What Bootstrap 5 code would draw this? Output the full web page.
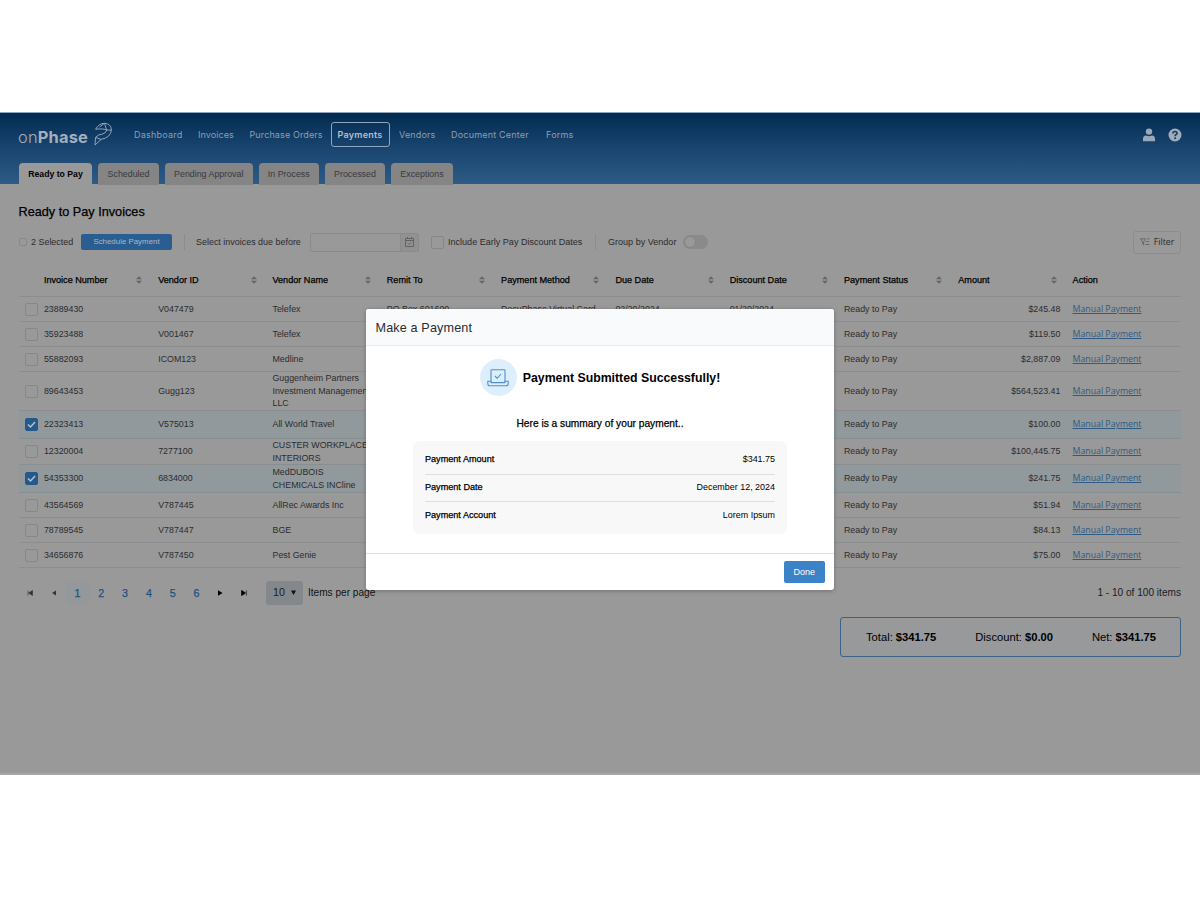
<!DOCTYPE html>
<html lang="en">
<head>
<meta charset="utf-8">
<title>onPhase - Ready to Pay Invoices</title>
<link href="https://cdn.jsdelivr.net/npm/bootstrap@5.3.0/dist/css/bootstrap.min.css" rel="stylesheet">
<style>
body{font-family:"Liberation Sans",Arial,sans-serif;font-size:8.85px;line-height:13px;color:#2c2c2e;background:#fff;overflow:hidden}
.stage{margin-top:112px;height:663px;background:#999;border-bottom:2px solid #a6a6a6}
.topbar{height:72px;background:linear-gradient(#032b50,#194570 50%,#2d5b85);border-top:1px solid #8da6bd;padding:0 18px 0 19px}
.topline{height:43px}
.brand{font:300 16.4px/20px Inter,sans-serif;color:#a3b0bc;width:76px;padding-top:4px;letter-spacing:.2px;margin-left:-1px;white-space:nowrap}
.brand b{font-weight:700}
.menu{font:400 9px/14px Inter,sans-serif;margin-left:13px}
.menu a{color:#8c9fb2;text-decoration:none;white-space:nowrap;padding:4.5px 0 4px 7px;border:1px solid transparent;height:25px}
.menu a:nth-child(1){width:64px;letter-spacing:.22px}.menu a:nth-child(2){width:51.5px;letter-spacing:.08px}.menu a:nth-child(3){width:89.5px;letter-spacing:.12px}
.menu a.on{width:59px;font-weight:600;color:#b5bfc9;border-color:#8fa5ba;border-radius:3px;padding-left:5.5px;letter-spacing:.25px}
.menu a:nth-child(5){width:53px;padding-left:8px;letter-spacing:.15px}.menu a:nth-child(6){width:95px;letter-spacing:.2px}.menu a:nth-child(7){letter-spacing:.2px}
.tabs{gap:6px;margin-top:7px;font-size:8.85px}
.tabs span{height:21.5px;line-height:22px;background:#858586;border-radius:4px 4px 0 0;color:#38393b;text-align:center;white-space:nowrap}
.tabs span.on{background:#999;color:#000;font-weight:700;font-size:8.7px}
.t1{width:73px}.t2{width:61px}.t3{width:87.5px}.t4{width:60.5px}.t5{width:60px}.t6{width:62px}
.med{-webkit-text-stroke:.25px currentColor}
.ttl{font-size:12.7px;line-height:16px;color:#000;margin:20px 0 0 18.5px}
.tools{height:24px;margin:10px 19px 0;font-size:8.95px}
.tools>*{flex:none}
.sq{display:block;width:13px;height:13px;border:1px solid #858789;border-radius:2px}
.sched{width:91px;height:16px;border-radius:2px;background:#2a5e91;color:#a8b8c8;text-align:center;font-size:7.9px;line-height:16px}
.rule{width:1px;height:16px;background:#8b8d8f}
.dt{width:109px;height:19px;border:1px solid #888a8c;border-radius:2px}
.dt span{width:18px;border-left:1px solid #8b8b8b;background:#919192}
.sw{width:25px;height:14px;border-radius:8px;background:#8a8a8b;padding:1px}
.sw i{display:block;width:12px;height:12px;border-radius:50%;background:#999;border:1px solid #858585}
.filt{width:48px;height:23px;border:1px solid #8b8c8e;border-radius:3px;font:8.8px/13px "Open Sans",sans-serif}
.grid{table-layout:fixed;width:1162px;margin:10px 0 0 19px;border-collapse:separate;border-spacing:0}
.grid th,.grid td{padding:0 0 0 5.9px;border-bottom:1px solid #8c8d8f;vertical-align:middle;line-height:12.66px}
.grid th{height:33px;padding-top:1px;color:#000;font-weight:400;font-size:9.1px}
.grid td:first-child{padding-left:5.5px}
.grid .sel td{background:#91999c;border-color:#868f92}
.grid .amt{text-align:right;padding-right:6.3px}
.grid a{font:8.75px/13px "Open Sans",sans-serif;line-height:12px;color:#2f5b85;text-decoration:underline}
.h25 td{height:25px}.h26 td{height:26px}.h28 td{height:28px}.h39 td{height:39px}
.grid .sel .sq{background:#25598a;border-color:#25598a}
.srt{float:right;margin:2px 10px 0 0}
.pager{margin:12px 18px 0;height:25px;font-size:10.7px}
.pg{width:23.8px;height:23px;line-height:24px;text-align:center;color:#225180;border-radius:3px}
.pg.on{background:#94989b}
.pg svg{display:block;margin:8.5px auto}
.size{width:37px;height:24px;border-radius:3px;background:#84878b;color:#1a1b1d;margin-left:10px}
.sum{width:341px;height:40px;margin:12px 19px 0 auto;border:1px solid #3d6287;border-radius:3px;font-size:11.2px;color:#000;padding:0 24px 0 25px;background:#97999b}
.dlg{left:366px;top:197px;width:468px;height:281px;border-radius:3px;background:#fff;box-shadow:0 1px 4px #0004;overflow:hidden;color:#000}
.dh{height:37px;background:#f9fafc;border-bottom:1px solid #e8eaeb;font-size:12.6px;letter-spacing:.15px;color:#2a2d31;padding:2px 10px 0 9.5px}
.dbod{height:208px;border-bottom:1px solid #dee1e4}
.disc{width:37px;height:37px;border-radius:50%;background:#ddeffc}
.box{margin:11px 47px 0;height:93px;border-radius:6px;background:#f8f8f9;padding:5px 12px 0;font-size:9.1px}
.box>div{height:27.5px}
.box>div+div{border-top:1px solid #dcdee0}
.box span+span{font-size:8.95px}
.done{width:40.5px;height:22px;border-radius:2px;background:#3b82c6;color:#fff;font-size:9px;line-height:23px;text-align:center;border:0;padding:0}
</style>
</head>
<body>
<main class="stage position-relative">
<header class="topbar">
 <div class="topline d-flex align-items-center">
  <div class="brand">on<b>Phase</b></div>
  <svg width="19" height="25" viewBox="0 0 19 25" fill="none" stroke="#8fa6bc" stroke-width="1" stroke-linejoin="round"><path d="M1.6 7.2 Q5 1.3 10.5 1.3 Q17.5 2 17.4 8.2 Q16.5 15.5 7.2 17.4 L1 23 1.6 15.4 Q3.4 12.6 8.8 11.9 Q12.2 11 12.6 8 Q10 6.4 1.6 7.2Z M10.5 1.3 L5.5 5 M10.5 1.3 L12.6 8 L17.4 8.2 M1.6 15.4 L7.2 17.4"/></svg>
  <nav class="menu d-flex"><a href="#">Dashboard</a><a href="#">Invoices</a><a href="#">Purchase Orders</a><a href="#" class="on">Payments</a><a href="#">Vendors</a><a href="#">Document Center</a><a href="#">Forms</a></nav>
  <svg class="ms-auto" width="12" height="14" viewBox="0 0 12 14" fill="#9aa9b8"><circle cx="6" cy="3.6" r="3.2"/><path d="M0 13.3 V11 Q0 8 3 7.6 Q6 9 9 7.6 Q12 8 12 11 V13.3Z"/></svg>
  <svg style="margin-left:13px" width="14" height="14" viewBox="0 0 14 14"><circle cx="7" cy="7" r="6.5" fill="#9fadba"/><path d="M4.9 5.5 Q5 3.5 7 3.5 Q9.1 3.5 9.1 5.2 Q9.1 6.2 7.9 6.8 Q7.1 7.2 7.1 8.2" fill="none" stroke="#123c65" stroke-width="1.6"/><circle cx="7.1" cy="10.2" r="1" fill="#123c65"/></svg>
 </div>
 <div class="tabs d-flex"><span class="t1 on">Ready to Pay</span><span class="t2">Scheduled</span><span class="t3">Pending Approval</span><span class="t4">In Process</span><span class="t5">Processed</span><span class="t6">Exceptions</span></div>
</header>
<h1 class="ttl med">Ready to Pay Invoices</h1>
<div class="tools d-flex align-items-center">
 <span class="sq" style="width:8px;height:8px"></span><span style="width:54px;padding-left:4px" class="text-nowrap">2 Selected</span>
 <span class="sched">Schedule Payment</span><span class="rule" style="margin:0 11px 0 12px"></span>
 <span style="width:114px" class="text-nowrap">Select invoices due before</span>
 <span class="dt d-flex justify-content-end"><span class="d-flex align-items-center justify-content-center"><svg width="9" height="10" viewBox="0 0 9 10" fill="none" stroke="#5c5e60" stroke-width=".9"><path d="M.5 1.5h8v8h-8zM.5 3.5h8M2.5 0v2M6.5 0v2M3 6.5l1 1 2-2"/></svg></span></span>
 <span class="sq" style="margin-left:12px"></span><span style="width:151px;padding-left:4px;font-size:9.05px" class="text-nowrap">Include Early Pay Discount Dates</span>
 <span class="rule"></span><span style="width:87px;padding-left:12px;font-size:9.05px" class="text-nowrap">Group by Vendor</span><span class="sw"><i></i></span>
 <span class="filt ms-auto d-flex align-items-center justify-content-center"><svg class="me-1" width="10" height="8" viewBox="0 0 10 8" fill="none" stroke="#5c5e60" stroke-width=".8"><path d="M.5.8h5L3.7 3.7V7L2.5 6V3.7zM7 .8h2.5M6 3.5h3M5.5 6.5h4"/></svg>Filter</span>
</div>
<table class="grid"><colgroup><col style="width:19px"></colgroup><thead><tr id="heads"><th></th></tr></thead><tbody id="rows"></tbody></table>
<div class="pager d-flex align-items-center">
 <span class="pg"><svg width="6" height="6" viewBox="0 0 6 6"><path d="M1 .5v5M5.5.5v5L1.6 3z" fill="#333" stroke="#333" stroke-width=".6"/></svg></span>
 <span class="pg"><svg width="6" height="6" viewBox="0 0 6 6"><path d="M5 .5v5L1 3z" fill="#333"/></svg></span>
 <span class="pg on med">1</span><span class="pg med">2</span><span class="pg med">3</span><span class="pg med">4</span><span class="pg med">5</span><span class="pg med">6</span>
 <span class="pg"><svg width="6" height="6" viewBox="0 0 6 6"><path d="M1 .3v5.4L5.5 3z" fill="#000"/></svg></span>
 <span class="pg"><svg width="6" height="6" viewBox="0 0 6 6"><path d="M5.4.3v5.4M.5.3v5.4L4.6 3z" fill="#000" stroke="#000" stroke-width=".6"/></svg></span>
 <span class="size d-flex align-items-center justify-content-center">10<svg style="margin-left:6px" width="5" height="5" viewBox="0 0 5 5"><path d="M0 .5h5L2.5 5z" fill="#111"/></svg></span>
 <span style="margin-left:5px;font-size:10.1px;color:#111" class="text-nowrap">Items per page</span>
 <span class="ms-auto text-nowrap" style="font-size:10.1px;color:#1c1c1e;padding-right:1px">1 - 10 of 100 items</span>
</div>
<div class="sum d-flex align-items-center justify-content-between"><span>Total: <b>$341.75</b></span><span>Discount: <b>$0.00</b></span><span>Net: <b>$341.75</b></span></div>

<section class="dlg position-absolute">
 <div class="dh d-flex align-items-center"><span>Make a Payment</span></div>
 <div class="dbod">
  <div class="d-flex justify-content-center align-items-center" style="padding-top:13px;gap:6px">
   <span class="disc d-flex align-items-center justify-content-center"><svg width="22" height="18" viewBox="0 0 22 18" fill="none" stroke="#4f90cc" stroke-width="1.1"><path d="M4 13.5V1.6Q4 .8 4.8.8H17.2Q18 .8 18 1.6V13.5M.8 12.2H4.2V13.6H17.8V12.2H21.2V14.5Q21.2 16.8 19 16.8H3Q.8 16.8.8 14.5ZM8 7l2.2 2.3L14 5"/></svg></span>
   <b style="font-size:12.3px;padding-top:2px">Payment Submitted Successfully!</b>
  </div>
  <div class="text-center med" style="margin-top:21px;font-size:10.2px">Here is a summary of your payment..</div>
  <div class="box">
   <div class="d-flex justify-content-between align-items-center"><span class="med">Payment Amount</span><span>$341.75</span></div>
   <div class="d-flex justify-content-between align-items-center"><span class="med">Payment Date</span><span>December 12, 2024</span></div>
   <div class="d-flex justify-content-between align-items-center"><span class="med">Payment Account</span><span>Lorem Ipsum</span></div>
  </div>
 </div>
 <div class="d-flex justify-content-end" style="padding:7px 9.5px 0 0"><button class="done">Done</button></div>
</section>
</main>
<script src="https://cdn.jsdelivr.net/npm/bootstrap@5.3.0/dist/js/bootstrap.bundle.min.js"></script>
<script>
const heads=['Invoice Number','Vendor ID','Vendor Name','Remit To','Payment Method','Due Date','Discount Date','Payment Status','Amount','Action'];
const arrows='<svg class="srt" width="6" height="8" viewBox="0 0 6 8"><path d="M0 3.3L3 .3 6 3.3zM0 4.7h6L3 7.7z" fill="#646668"/></svg>';
document.getElementById('heads').innerHTML+=heads.map((h,i)=>`<th><span class="med">${h}</span>${i<9?arrows:''}</th>`).join('');
const rows=[
[25,'23889430','V047479','Telefex','$245.48'],
[25,'35923488','V001467','Telefex','$119.50'],
[25,'55882093','ICOM123','Medline','$2,887.09'],
[39,'89643453','Gugg123','Guggenheim Partners<br>Investment Management<br>LLC','$564,523.41'],
[28,'22323413','V575013','All World Travel','$100.00',1],
[26,'12320004','7277100','CUSTER WORKPLACE<br>INTERIORS','$100,445.75'],
[28,'54353300','6834000','MedDUBOIS<br>CHEMICALS INCline','$241.75',1],
[25,'43564569','V787445','AllRec Awards Inc','$51.94'],
[25,'78789545','V787447','BGE','$84.13'],
[25,'34656876','V787450','Pest Genie','$75.00']];
const tick='<svg width="11" height="11" viewBox="0 0 11 11" style="display:block"><path d="M2 5.5l2.5 2.5L9 3" fill="none" stroke="#b5c2ce" stroke-width="1.5"/></svg>';
document.getElementById('rows').innerHTML=rows.map((r,i)=>`<tr class="h${r[0]} ${r[5]?'sel':''}"><td><span class="sq">${r[5]?tick:''}</span></td><td>${r[1]}</td><td>${r[2]}</td><td class="text-nowrap">${r[3]}</td>`+
(i?'<td></td><td></td><td></td><td></td>':'<td>PO Box 601600</td><td class="text-nowrap">DocuPhase Virtual Card</td><td>02/20/2024</td><td>01/20/2024</td>')+
`<td>Ready to Pay</td><td class="amt">${r[4]}</td><td><a href="#">Manual Payment</a></td></tr>`).join('');
</script>
</body>
</html>
